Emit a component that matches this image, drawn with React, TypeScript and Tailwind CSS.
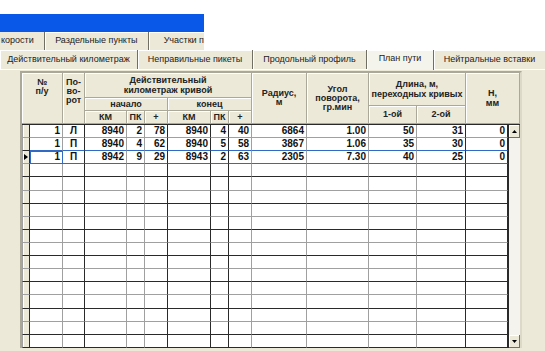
import React from 'react';

type Col = { w: string; border: string; align: 'r' | 'c' };

const cols: Col[] = [
  { w: 'w-[33px]', border: 'border-r-[#a0a0a0]', align: 'r' },
  { w: 'w-[22px]', border: 'border-r-[#2a2a2a]', align: 'c' },
  { w: 'w-[42px]', border: 'border-r-[#a0a0a0]', align: 'r' },
  { w: 'w-[18px]', border: 'border-r-[#a0a0a0]', align: 'r' },
  { w: 'w-[23px]', border: 'border-r-[#2a2a2a]', align: 'r' },
  { w: 'w-[43px]', border: 'border-r-[#2a2a2a]', align: 'r' },
  { w: 'w-[18px]', border: 'border-r-[#2a2a2a]', align: 'r' },
  { w: 'w-[23px]', border: 'border-r-[#a0a0a0]', align: 'r' },
  { w: 'w-[55px]', border: 'border-r-[#a0a0a0]', align: 'r' },
  { w: 'w-[62px]', border: 'border-r-[#a0a0a0]', align: 'r' },
  { w: 'w-[48px]', border: 'border-r-[#a0a0a0]', align: 'r' },
  { w: 'w-[49px]', border: 'border-r-[#2a2a2a]', align: 'r' },
  { w: 'w-[42px]', border: 'border-r-[#2a2a2a]', align: 'r' },
];

const data: string[][] = [
  ['1', 'Л', '8940', '2', '78', '8940', '4', '40', '6864', '1.00', '50', '31', '0'],
  ['1', 'П', '8940', '4', '62', '8940', '5', '58', '3867', '1.06', '35', '30', '0'],
  ['1', 'П', '8942', '9', '29', '8943', '2', '63', '2305', '7.30', '40', '25', '0'],
];

function HCell({ className = '', children }: { className?: string; children?: React.ReactNode }) {
  return (
    <div
      className={`flex flex-col items-center text-center bg-[#ece9d8] border-r border-b border-[#aca899] shadow-[inset_1px_1px_0_#ffffff] font-bold text-[9px] leading-[9px] text-[#222] ${className}`}
    >
      {children}
    </div>
  );
}

function rowBorder(i: number) {
  if (i === 1 || i === 2) return 'border-b-[#316ac5]';
  if (i === 16) return 'border-b-[#2a2a2a]';
  return i % 2 === 1 ? 'border-b-[#2a2a2a]' : 'border-b-[#a0a0a0]';
}
function indBorder(i: number) {
  if (i === 16) return 'border-b-[#2a2a2a]';
  return i % 2 === 1 ? 'border-b-[#2a2a2a]' : 'border-b-[#a0a0a0]';
}

function Tab({ className = '', children }: { className?: string; children?: React.ReactNode }) {
  return (
    <div className={`flex items-center justify-center border-r border-r-[#716f64] shadow-[inset_1px_1px_0_#ffffff] text-[9px] text-[#222] whitespace-nowrap ${className}`}>
      {children}
    </div>
  );
}

export default function App() {
  const rows = Array.from({ length: 17 }, (_, i) => data[i] ?? null);
  return (
    <div className="w-[545px] h-[351px] bg-white overflow-hidden font-['Liberation_Sans',Arial,sans-serif]">
      <div className="h-[14px]" />
      <div className="w-[204px] h-[18px] bg-[#0a58e8]" />
      <div className="flex w-[204px] h-[18px] bg-[#ece9d8]">
        <Tab className="w-[46px] justify-start pl-[1px] shadow-none">корости</Tab>
        <Tab className="w-[106px]">Раздельные пункты</Tab>
        <div className="flex-1 flex items-center pl-[15px] text-[9px] text-[#222] whitespace-nowrap shadow-[inset_1px_1px_0_#ffffff]">Участки п</div>
      </div>
      <div className="flex h-[20px] bg-[#ece9d8] border-b border-b-white">
        <Tab className="w-[138px]">Действительный километраж</Tab>
        <Tab className="w-[115px]">Неправильные пикеты</Tab>
        <Tab className="w-[114px] pt-[1px]">Продольный профиль</Tab>
        <Tab className="w-[67px] bg-[#f5f4ec] pb-[2px] -mb-px">План пути</Tab>
        <Tab className="flex-1 border-r-0">Нейтральные вставки</Tab>
      </div>
      <div className="bg-[#ece9d8] h-[281px] pt-px">
        <div className="ml-[20px] w-[502px] border-l-2 border-t-2 border-l-[#aca899] border-t-[#aca899] border-r-2 border-r-[#dcd9c8]">
          <div className="flex h-[51px]">
            <HCell className="w-[41px] pt-[5px]">
              <span>№</span>
              <span>п/у</span>
            </HCell>
            <HCell className="w-[22px] pt-[5px] leading-[8.5px]">
              <span>По-</span>
              <span>во-</span>
              <span>рот</span>
            </HCell>
            <div className="flex flex-col w-[167px]">
              <HCell className="h-[25px] justify-center leading-[10px]">
                <span>Действительный</span>
                <span>километраж кривой</span>
              </HCell>
              <div className="flex h-[13px]">
                <HCell className="w-[83px] justify-center">начало</HCell>
                <HCell className="w-[84px] justify-center">конец</HCell>
              </div>
              <div className="flex h-[13px]">
                <HCell className="w-[42px] justify-center">КМ</HCell>
                <HCell className="w-[18px] justify-center">ПК</HCell>
                <HCell className="w-[23px] justify-center">+</HCell>
                <HCell className="w-[43px] justify-center">КМ</HCell>
                <HCell className="w-[18px] justify-center">ПК</HCell>
                <HCell className="w-[23px] justify-center">+</HCell>
              </div>
            </div>
            <HCell className="w-[55px] justify-center">
              <span>Радиус,</span>
              <span>м</span>
            </HCell>
            <HCell className="w-[62px] justify-center">
              <span>Угол</span>
              <span>поворота,</span>
              <span>гр.мин</span>
            </HCell>
            <div className="flex flex-col w-[97px]">
              <HCell className="h-[33px] justify-center leading-[10px]">
                <span>Длина, м,</span>
                <span>переходных кривых</span>
              </HCell>
              <div className="flex flex-1">
                <HCell className="w-[48px] justify-center">1-ой</HCell>
                <HCell className="w-[49px] justify-center">2-ой</HCell>
              </div>
            </div>
            <HCell className="flex-1 justify-center leading-[10px]">
              <span>Н,</span>
              <span>мм</span>
            </HCell>
          </div>
          <div className="flex h-[224px] border-t border-t-[#2a2a2a]">
            <div className="flex flex-col w-[486px] bg-white">
              {rows.map((r, i) => (
                <div key={i} className="flex h-[13.12px]">
                  <div className={`w-[8px] shrink-0 flex items-center bg-[#ece9d8] border-l border-l-[#a0a0a0] border-r border-r-[#2a2a2a] border-b ${indBorder(i)} shadow-[inset_1px_0_0_#ffffff]`}>
                    {i === 2 && (
                      <svg width="4" height="6" viewBox="0 0 4 6" className="ml-[1px]">
                        <path d="M0 0 L4 3 L0 6 Z" fill="#000" />
                      </svg>
                    )}
                  </div>
                  {cols.map((c, j) => (
                    <div
                      key={j}
                      className={`${c.w} shrink-0 flex items-center border-r ${c.border} border-b ${rowBorder(i)} ${
                        c.align === 'r' ? 'justify-end pr-[2px]' : 'justify-center'
                      } ${i === 2 && j === 0 ? 'outline outline-1 outline-[#316ac5] -outline-offset-1' : ''} text-[10px] font-bold leading-[10px] text-[#111]`}
                    >
                      {r ? r[j] : ''}
                    </div>
                  ))}
                </div>
              ))}
            </div>
            <div className="w-[12px] flex flex-col bg-[#f4f3ee] border-l border-l-[#2a2a2a]">
              <div className="h-[13px] flex items-center justify-center bg-[#ece9d8] border-r border-b border-[#716f64] shadow-[inset_1px_1px_0_#ffffff]">
                <svg width="5" height="3" viewBox="0 0 5 3">
                  <path d="M0 3 L2.5 0 L5 3 Z" fill="#000" />
                </svg>
              </div>
              <div className="flex-1" />
              <div className="h-[13px] flex items-center justify-center bg-[#ece9d8] border-r border-b border-[#716f64] shadow-[inset_1px_1px_0_#ffffff]">
                <svg width="5" height="3" viewBox="0 0 5 3">
                  <path d="M0 0 L2.5 3 L5 0 Z" fill="#000" />
                </svg>
              </div>
            </div>
          </div>
        </div>
      </div>
    </div>
  );
}
